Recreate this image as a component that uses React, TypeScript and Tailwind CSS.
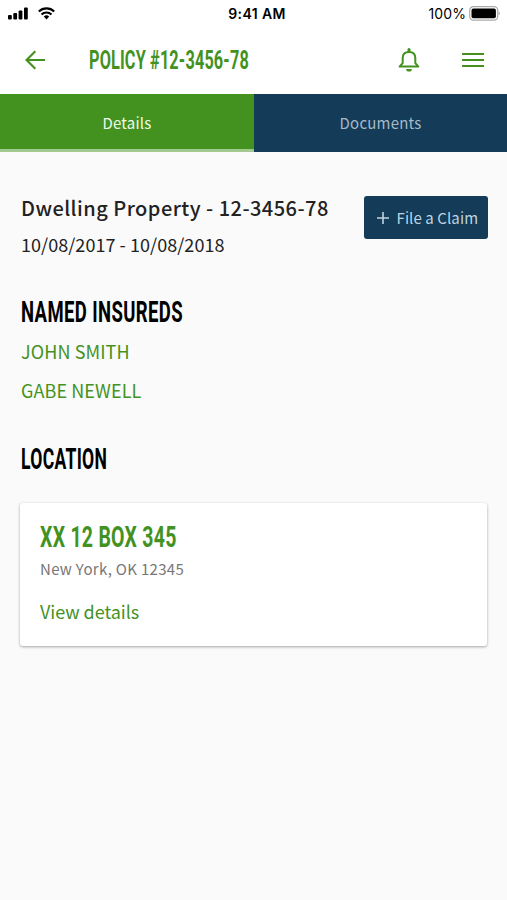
import type { ReactNode } from "react";

const sans = "font-['Noto_Sans_CJK_SC',sans-serif]";

function Heading({ className, children }: { className: string; children: ReactNode }) {
  return (
    <h2 className={`origin-left whitespace-nowrap font-['Roboto',sans-serif] ${className}`}>{children}</h2>
  );
}

function StatusBar() {
  return (
    <div className="flex h-7 items-center justify-between pl-2 pr-[7px] font-['Inter',sans-serif] text-black">
      <div className="flex w-[123px] items-center gap-[10px]">
        <svg className="-mt-px" width="20" height="13" viewBox="0 0 20 13" fill="currentColor">
          <rect x="0" y="8" width="3.8" height="4.5" rx="1" />
          <rect x="5.3" y="6" width="3.8" height="6.5" rx="1" />
          <rect x="10.6" y="3.500" width="3.8" height="9" rx="1" />
          <rect x="16" y=".5" width="3.8" height="12" rx="1" />
        </svg>
        <svg className="-mt-0.5" width="17" height="13" viewBox="0 0 17 13" fill="none" stroke="currentColor" strokeWidth="2.1">
          <path d="M.8 4.5a11 11 0 0 1 15.4 0" />
          <path d="M3.5 7.5a7.1 7.1 0 0 1 10 0" />
          <path d="M5.8 9.5a3.9 3.9 0 0 1 5.4 0L8.5 12.4z" fill="currentColor" stroke="none" />
        </svg>
      </div>
      <div className="-mt-px text-[14px] font-semibold tracking-[0.4px]">9:41 AM</div>
      <div className="-mt-0.5 flex w-[117px] items-center justify-end gap-[3px]">
        <span className="text-[14px] tracking-[0.1px]">100%</span>
        <svg width="31" height="15" viewBox="0 0 31 15">
          <rect x=".7" y=".7" width="28" height="13.4" rx="3.6" fill="#fff" stroke="#aaa" strokeWidth="1.2" />
          <rect x="2.5" y="2.6" width="24.4" height="9.7" rx="1.8" fill="#000" />
          <path d="M29.700 5.300q2 2 0 4.200z" fill="#999" />
        </svg>
      </div>
    </div>
  );
}

function Header() {
  return (
    <header className="flex h-[66px] items-center pl-6 pr-[23px] text-[#43921f]">
      <svg className="-mt-[3px]" width="22" height="20" viewBox="0 0 22 20" fill="none" stroke="currentColor" strokeWidth="2.1">
        <path d="M21 10H3M11.3 1.2 2.5 10l8.8 8.8" />
      </svg>
      <div className="ml-[43px] grow">
        <Heading className="w-[230px] scale-x-[0.65] text-[25px] font-bold leading-[30px] tracking-[0.25px]">POLICY #12-3456-78</Heading>
      </div>
      <svg className="-mt-0.5" width="22" height="26" viewBox="0 0 22 26" fill="none" stroke="currentColor" strokeWidth="2">
        <path d="M1.600 19.600h18.800l-3.100-3.500V11c0-3.700-2.300-6.100-6.300-6.100S4.700 7.300 4.700 11v5.100z" strokeLinejoin="round" />
        <path d="M9.500 4.700V2.500a1.500 1.500 0 0 1 3 0v2.200z" fill="currentColor" stroke="none" />
        <path d="M8.200 22h5.600a2.800 2.600 0 0 1-5.600 0z" fill="currentColor" stroke="none" />
      </svg>
      <svg className="-mt-[3px] ml-[42px]" width="22" height="16" viewBox="0 0 22 16" stroke="currentColor" strokeWidth="2.1">
        <path d="M0 2h22M0 8h22M0 14h22" />
      </svg>
    </header>
  );
}

export default function App() {
  return (
    <div className={`h-[900px] w-full overflow-hidden bg-[#fafafa] ${sans}`}>
      <div className="bg-white">
        <StatusBar />
        <Header />
      </div>
      <nav className="flex h-[58px] text-center text-[15px] leading-[22px] tracking-[0.2px]">
        <div className="w-[254px] border-b-[3px] border-[#a1c98f] bg-[#43921f] pt-[18px] text-[#f0fae9]">Details</div>
        <div className="grow bg-[#143b57] pt-[18px] text-[#a4bac9]">Documents</div>
      </nav>
      <main className="px-5">
        <section className="flex justify-between pt-11">
          <div className="pl-px text-[#222]">
            <h1 className="whitespace-nowrap text-[20px] font-medium leading-6 tracking-[0.47px]">Dwelling Property - 12-3456-78</h1>
            <p className="mt-3 whitespace-nowrap text-[18px] leading-6 tracking-[0.05px]">10/08/2017 - 10/08/2018</p>
          </div>
          <button className="mr-[-0.5px] flex h-[43px] w-[124px] shrink-0 items-center gap-2 rounded-[3px] bg-[#143b57] pl-[13px] text-[#bfd4e2]">
            <svg width="12" height="12" viewBox="0 0 12 12" stroke="currentColor" strokeWidth="1.600">
              <path d="M0 6h12M6 0v12" />
            </svg>
            <span className="whitespace-nowrap text-[15px] leading-5 tracking-[0.1px]">File a Claim</span>
          </button>
        </section>
        <section className="mt-10 pl-px">
          <Heading className="w-[240px] scale-x-[0.638] text-[29px] font-bold leading-8 tracking-[0.6px] text-black">NAMED INSUREDS</Heading>
          <ul className="mt-[11px] text-[18px] leading-6 tracking-[0.1px] text-[#43921f]">
            <li>JOHN SMITH</li>
            <li className="mt-[15px]">GABE NEWELL</li>
          </ul>
        </section>
        <section className="mt-[41px]">
          <Heading className="ml-px w-[240px] scale-x-[0.605] text-[29px] font-bold leading-8 tracking-[0.5px] text-black">LOCATION</Heading>
          <article className="mt-[28px] h-[143px] rounded-[3px] bg-white px-5 pt-[18px] shadow-[0_1px_3px_rgba(0,0,0,0.35)]">
            <Heading className="w-[240px] scale-x-[0.672] text-[29px] font-bold leading-8 tracking-[0.4px] text-[#43921f]">XX 12 BOX 345</Heading>
            <p className="mt-1.5 text-[15px] leading-5 tracking-[0.3px] text-[#777]">New York, OK 12345</p>
            <a className="mt-5 block text-[18px] leading-6 tracking-[-0.05px] text-[#43921f]">View details</a>
          </article>
        </section>
      </main>
    </div>
  );
}
